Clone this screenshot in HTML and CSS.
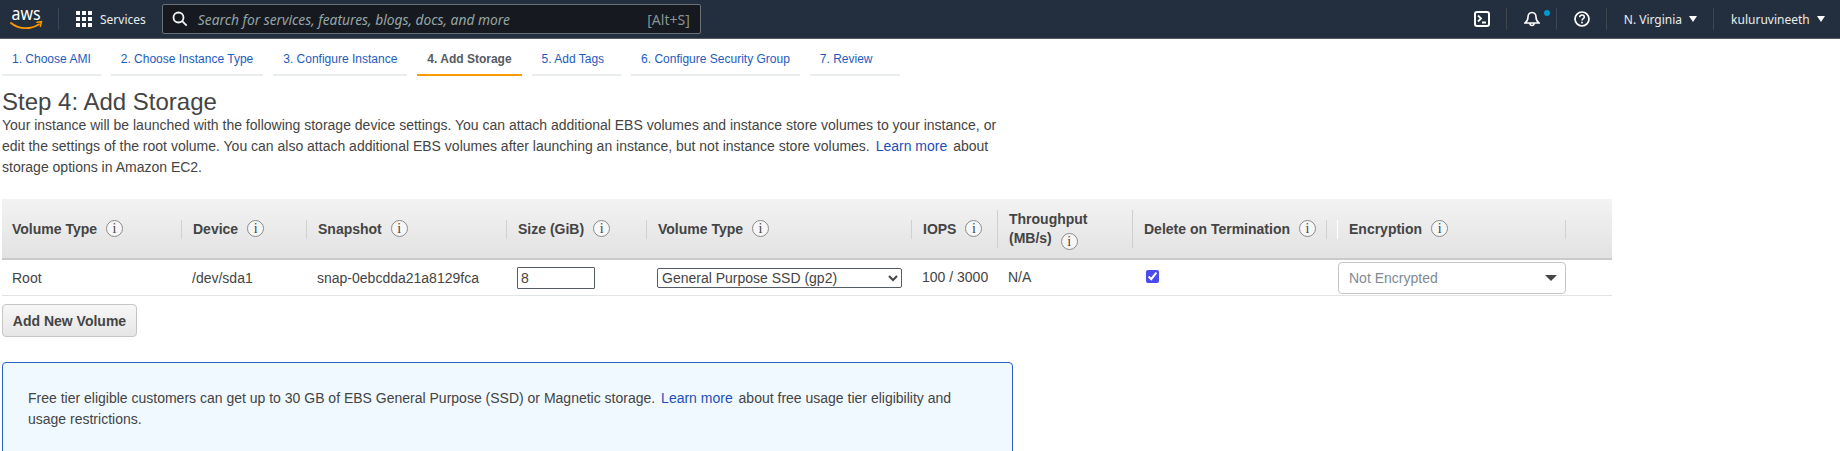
FILE: index.html
```html
<!DOCTYPE html>
<html lang="en">
<head>
<meta charset="utf-8">
<title>Step 4: Add Storage</title>
<link rel="stylesheet" href="styles.css">
</head>
<body>
<header class="nav">
  <svg class="logo" viewBox="0 0 34 38" width="34" height="38" aria-label="aws">
    <text x="1.500" y="20" class="logo-text" textLength="29" lengthAdjust="spacingAndGlyphs">aws</text>
    <path d="M1 23c4 3.400 9 5.200 14.500 5.200 4.800 0 9.500-1.400 13.500-4" fill="none" stroke="#f90" stroke-width="1.800" stroke-linecap="round"/>
    <path d="M27 22.300l4.500-.6-1.200 4.500" fill="none" stroke="#f90" stroke-width="1.500" stroke-linecap="round"/>
  </svg>
  <span class="nav-sep nav-sep-logo"></span>
  <span class="services-grid"><i></i><i></i><i></i><i></i><i></i><i></i><i></i><i></i><i></i></span>
  <span class="services-label">Services</span>
  <div class="search">
    <svg viewBox="0 0 16 16" width="16" height="16"><circle cx="6.500" cy="6.500" r="5" fill="none" stroke="#f2f3f3" stroke-width="1.800"/><path d="M10.200 10.200l4.500 4.500" stroke="#f2f3f3" stroke-width="1.800"/></svg>
    <span class="search-hint">Search for services, features, blogs, docs, and more</span>
    <span class="search-key">[Alt+S]</span>
  </div>
  <svg class="ico ico-shell" viewBox="0 0 16 16" width="16" height="16"><rect x="1" y="1" width="14" height="14" rx="2" fill="none" stroke="#fff" stroke-width="2"/><path d="M4 4.500l3 3-3 3M8 11.500h4" fill="none" stroke="#fff" stroke-width="1.800"/></svg>
  <span class="nav-sep"></span>
  <span class="bell-wrap">
    <svg class="ico" viewBox="0 0 16 16" width="16" height="16"><path d="M8 1.500c-2.500 0-4 2-4 4.500 0 3-1 4.500-3 6h14c-2-1.500-3-3-3-6 0-2.500-1.500-4.500-4-4.500zM6 12.500a2 2 0 0 0 4 0" fill="none" stroke="#fff" stroke-width="1.600"/></svg>
    <span class="bell-dot"></span>
  </span>
  <span class="nav-sep"></span>
  <svg class="ico" viewBox="0 0 16 16" width="16" height="16"><circle cx="8" cy="8" r="7" fill="none" stroke="#fff" stroke-width="1.700"/><path d="M5.700 6.200c0-1.400 1-2.200 2.300-2.200s2.300.8 2.300 2c0 1.700-2.300 1.700-2.300 3.500" fill="none" stroke="#fff" stroke-width="1.500"/><rect x="7.200" y="10.700" width="1.600" height="1.700" fill="#fff"/></svg>
  <span class="nav-sep"></span>
  <span class="nav-menu nav-region">N. Virginia<b class="nav-caret"></b></span>
  <span class="nav-sep"></span>
  <span class="nav-menu">kuluruvineeth<b class="nav-caret"></b></span>
</header>

<nav class="tabs">
  <a class="tab">1. Choose AMI</a>
  <a class="tab">2. Choose Instance Type</a>
  <a class="tab">3. Configure Instance</a>
  <a class="tab tab-active">4. Add Storage</a>
  <a class="tab tab-tags">5. Add Tags</a>
  <a class="tab">6. Configure Security Group</a>
  <a class="tab tab-review">7. Review</a>
</nav>

<main class="page">
  <h1 class="title">Step 4: Add Storage</h1>
  <p class="intro">Your instance will be launched with the following storage device settings. You can attach additional EBS volumes and instance store volumes to your instance, or edit the settings of the root volume. You can also attach additional EBS volumes after launching an instance, but not instance store volumes. <a class="link">Learn more</a> about storage options in Amazon EC2.</p>

  <div class="table">
    <div class="th th-first"><span>Volume Type</span><i class="info">i</i></div>
    <div class="th"><span>Device</span><i class="info">i</i></div>
    <div class="th"><span>Snapshot</span><i class="info">i</i></div>
    <div class="th"><span>Size (GiB)</span><i class="info">i</i></div>
    <div class="th"><span>Volume Type</span><i class="info">i</i></div>
    <div class="th th-tall"><span>IOPS</span><i class="info">i</i></div>
    <div class="th th-tall th-through"><span>Throughput<br>(MB/s)<i class="info info-inline">i</i></span></div>
    <div class="th th-delete"><span>Delete on Termination</span><i class="info">i</i></div>
    <div class="th"><span>Encryption</span><i class="info">i</i></div>
    <div class="th th-empty"></div>

    <div class="td">Root</div>
    <div class="td">/dev/sda1</div>
    <div class="td">snap-0ebcdda21a8129fca</div>
    <div class="td td-size"><input class="size-input" type="text" value="8"></div>
    <div class="td td-type"><select class="type-select"><option>General Purpose SSD (gp2)</option></select></div>
    <div class="td td-up">100 / 3000</div>
    <div class="td td-up">N/A</div>
    <div class="td td-check"><input class="check" type="checkbox" checked></div>
    <div class="td td-enc"><div class="enc">Not Encrypted<b class="enc-caret"></b></div></div>
    <div class="td"></div>
  </div>

  <button class="add-btn" type="button">Add New Volume</button>

  <div class="notice">
    <p>Free tier eligible customers can get up to 30 GB of EBS General Purpose (SSD) or Magnetic storage. <a class="link">Learn more</a> about free usage tier eligibility and usage restrictions.</p>
  </div>
</main>
</body>
</html>
```
FILE: styles.css
```css
* { box-sizing: border-box; }
html, body { margin: 0; padding: 0; height: 451px; overflow: hidden; background: #fff; }
body { font-family: "Liberation Sans", Arial, sans-serif; font-size: 14px; color: #444; }

.nav { height: 39px; background: #232f3e; border-bottom: 1px solid #545b64; display: flex; align-items: center; padding-left: 10px; font-family: "Noto Sans", sans-serif; color: #eaeded; font-size: 12px; }
.logo { flex: none; }
.logo-text { font-family: "Noto Sans", sans-serif; font-size: 18px; fill: #fff; }
.nav-sep { width: 1px; height: 22px; background: #414750; flex: none; margin: 0 17px 0 16px; }
.nav-sep-logo { margin: 0 17px 0 14px; }
.services-grid { display: grid; grid-template-columns: repeat(3, 4px); grid-auto-rows: 4px; gap: 2px; flex: none; }
.services-grid i { background: #fff; }
.services-label { margin-left: 8px; margin-right: 16px; color: #eaeded; }
.search { width: 539px; height: 30px; background: #16191f; border: 1px solid #687078; border-radius: 2px; display: flex; align-items: center; padding: 0 10px 0 9px; flex: none; margin-right: 773px; }
.search-hint { margin-left: 10px; font-style: italic; font-size: 13.800px; color: #95a5a6; flex: 1; }
.search-key { font-size: 14px; color: #879596; }
.ico { flex: none; display: block; }
.bell-wrap { position: relative; display: block; flex: none; }
.bell-dot { position: absolute; right: -10px; top: -1px; width: 6px; height: 6px; border-radius: 50%; background: #0099cc; }
.nav-menu { display: inline-flex; align-items: center; font-size: 12px; flex: none; }
.nav-caret { width: 0; height: 0; border-left: 4.500px solid transparent; border-right: 4.500px solid transparent; border-top: 6px solid #fff; margin-left: 7px; }

.tabs { display: flex; gap: 10px; padding: 0 2px; height: 37px; }
.tab { display: block; height: 37px; padding: 13px 10px 0; font-size: 12px; line-height: 14px; color: #1d5bbf; border-bottom: 2px solid #eaeded; white-space: nowrap; }
.tab-tags { padding-right: 17px; }
.tab-review { padding-right: 27px; }
.tab-active { color: #545b64; font-weight: bold; border-bottom-color: #f90; }

.page { padding: 12px 2px 0; }
.title { margin: 0; font-size: 24px; font-weight: normal; line-height: 27px; color: #444; }
.intro { margin: 0; width: 1004px; line-height: 21px; color: #444; }
.link { color: #1d4fb8; margin: 0 2px; }

.table { display: grid; grid-template-columns: 180px 125px 200px 140px 265px 86px 135px 205px 228px 46px; width: 1610px; margin-top: 21px; }
.th { height: 61px; background: linear-gradient(#f3f3f3, #e2e2e2); border-bottom: 2px solid #c9c9c9; display: flex; align-items: center; padding-left: 11px; font-weight: bold; color: #444; position: relative; }
.th::before { content: ""; position: absolute; right: 0; top: 21px; height: 19px; width: 1px; background: #cfcfcf; box-shadow: 1px 0 0 #fff; }
.th-first { padding-left: 10px; }
.th-tall::before { top: 11px; height: 38px; }
.th-through { padding-top: 2px; }
.th-through span { line-height: 19px; }
.th-delete::before { right: 11px; box-shadow: none; }
.th-delete::after { content: ""; position: absolute; right: 0; top: 21px; height: 19px; width: 1px; background: #fff; }
.th-empty::before { display: none; }
.info { display: inline-block; width: 17px; height: 17px; margin-left: 9px; border: 1px solid #8a8a8a; border-radius: 50%; background: #f7f7f7; font-family: "Liberation Serif", serif; font-style: normal; font-weight: normal; font-size: 14px; line-height: 15px; text-align: center; color: #444; flex: none; }
.info-inline { vertical-align: -3px; }

.td { height: 36px; border-bottom: 1px solid #e1e4e5; display: flex; align-items: center; padding-left: 10px; color: #444; }
.td-up { padding-bottom: 2px; }
.td-size { padding-left: 10px; }
.size-input { width: 78px; height: 22px; border: 1px solid #545b64; border-radius: 1px; padding: 0 3px; font: 14px "Liberation Sans", sans-serif; color: #444; background: #fff; }
.td-type { padding-left: 10px; }
.type-select { width: 245px; height: 20px; border: 1px solid #545b64; border-radius: 2px; padding: 0; font: 14px "Liberation Sans", sans-serif; color: #444; background-color: #fff; }
.check { width: 13px; height: 13px; margin: 0 0 2px 3px; accent-color: #4a4af0; }
.td-check { padding-left: 10px; }
.td-enc { padding-left: 0; align-items: flex-start; }
.enc { width: 228px; height: 32px; margin-top: 2px; border: 1px solid #c6c6c6; border-radius: 4px; background: #fff; padding-left: 10px; display: flex; align-items: center; justify-content: space-between; padding-right: 8px; color: #808a96; position: relative; }
.enc-caret { width: 0; height: 0; border-left: 6px solid transparent; border-right: 6px solid transparent; border-top: 6px solid #444; }

.add-btn { display: block; margin-top: 8px; width: 135px; height: 33px; border: 1px solid #c6c6c6; border-radius: 4px; background: linear-gradient(#f7f7f7, #e6e6e6); font: bold 14px "Liberation Sans", sans-serif; color: #444; padding: 0; }

.notice { width: 1011px; height: 120px; margin-top: 25px; border: 1px solid #2b5fc9; border-radius: 4px; background: #f0f9ff; padding: 25px 25px 0; }
.notice p { margin: 0; line-height: 21px; color: #444; }
```
